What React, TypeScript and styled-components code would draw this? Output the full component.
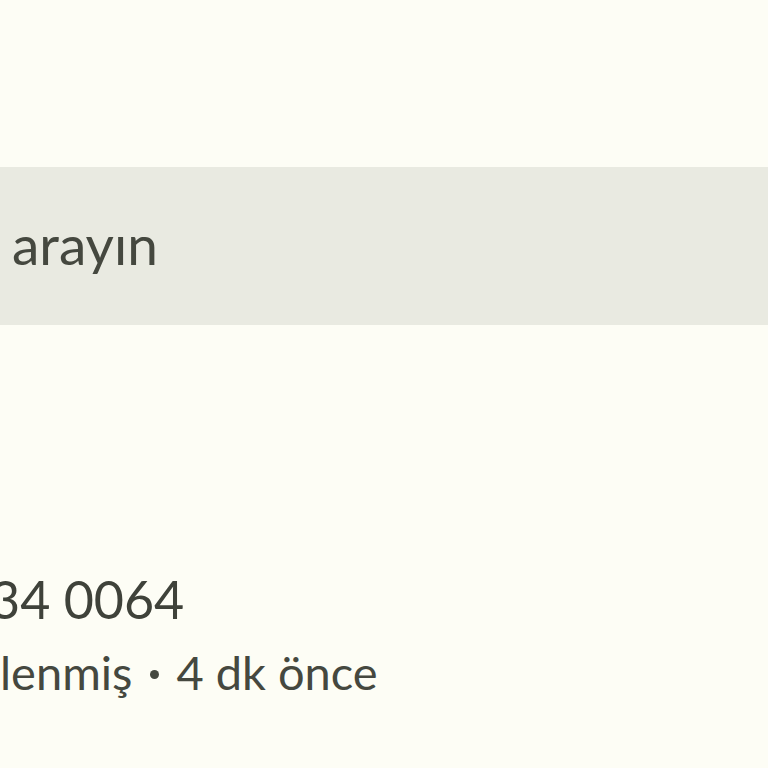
import React from 'react';
import styled, { createGlobalStyle } from 'styled-components';

const GlobalStyle = createGlobalStyle`
  html, body {
    margin: 0;
    padding: 0;
    background: #fdfdf5;
  }
  body {
    font-family: Lato, 'Open Sans', sans-serif;
    overflow: hidden;
  }
`;

const Page = styled.div`
  width: 768px;
  height: 768px;
  overflow: hidden;
  background: #fdfdf5;
  display: flex;
  flex-direction: column;
  padding-top: 167px;
  box-sizing: border-box;
`;

const SearchBar = styled.div`
  height: 158px;
  background: #e9eae1;
  display: flex;
  align-items: center;
  padding-left: 12px;
`;

const SearchHint = styled.span`
  font-size: 55px;
  color: #45483f;
  line-height: 1;
  margin-top: -4px;
`;

const Contact = styled.div`
  display: flex;
  flex-direction: column;
  margin-top: 243px;
`;

const PhoneNumber = styled.div<{ $shift: number }>`
  font-size: 52px;
  line-height: 62px;
  color: #3f423a;
  margin-left: ${({ $shift }) => $shift}px;
  white-space: nowrap;
`;

const Meta = styled.div`
  font-size: 47px;
  line-height: 60px;
  margin-top: 12px;
  color: #45483f;
  white-space: nowrap;
  display: flex;
  align-items: baseline;
`;

const Bullet = styled.span`
  width: 9px;
  height: 9px;
  border-radius: 50%;
  background: #45483f;
  align-self: center;
  margin: 5px 17px 0 18px;
`;

export default function App() {
  return (
    <>
      <GlobalStyle />
      <Page>
        <SearchBar>
          <SearchHint>arayın</SearchHint>
        </SearchBar>
        <Contact>
          <PhoneNumber $shift={-10}>34 0064</PhoneNumber>
          <Meta>
            <span>lenmiş</span>
            <Bullet />
            <span>4 dk önce</span>
          </Meta>
        </Contact>
      </Page>
    </>
  );
}
